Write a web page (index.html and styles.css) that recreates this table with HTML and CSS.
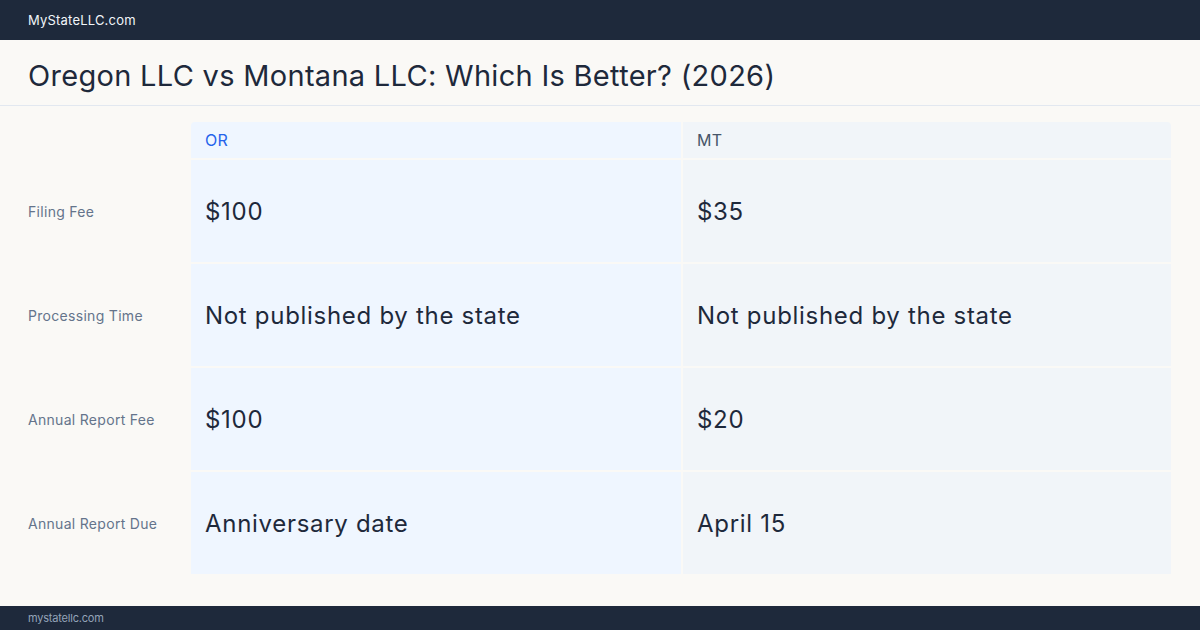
FILE: index.html
```html
<!DOCTYPE html>
<html lang="en">

<head>
    <meta charset="UTF-8">
    <meta name="viewport" content="width=device-width, initial-scale=1.0">
    <title>Oregon LLC vs Montana LLC</title>
    <link rel="stylesheet" href="styles.css">
</head>

<body>
    <div class="page">
        <!-- Top bar -->
        <div class="topbar">MyStateLLC.com</div>

        <!-- Title -->
        <div class="title-bar">
            <h1>Oregon LLC vs Montana LLC: Which Is Better? (2026)</h1>
        </div>

        <!-- Comparison table -->
        <div class="compare">
            <div class="label head"></div>
            <div class="cell head or">OR</div>
            <div class="cell head mt">MT</div>

            <div class="label">Filing Fee</div>
            <div class="cell or">$100</div>
            <div class="cell mt">$35</div>

            <div class="label">Processing Time</div>
            <div class="cell or">Not published by the state</div>
            <div class="cell mt">Not published by the state</div>

            <div class="label">Annual Report Fee</div>
            <div class="cell or">$100</div>
            <div class="cell mt">$20</div>

            <div class="label">Annual Report Due</div>
            <div class="cell or">Anniversary date</div>
            <div class="cell mt">April 15</div>
        </div>

        <!-- Footer -->
        <div class="footer">mystatellc.com</div>
    </div>
</body>

</html>
```

FILE: styles.css
```css
* {
    margin: 0;
    padding: 0;
    box-sizing: border-box;
}

body {
    font-family: Inter, "Noto Sans", sans-serif;
    background-color: #faf9f6;
    color: #1e293b;
}

.page {
    width: 1200px;
    height: 630px;
    display: flex;
    flex-direction: column;
}

.topbar {
    height: 40px;
    background-color: #1e293b;
    color: #f1f5f9;
    font-size: 13px;
    padding: 0 28px;
    display: flex;
    align-items: center;
    letter-spacing: 0.2px;
}

.title-bar {
    height: 66px;
    padding: 5px 28px 0 28px;
    display: flex;
    align-items: center;
    border-bottom: 1px solid #e2e8f0;
}

.title-bar h1 {
    font-size: 29px;
    font-weight: 400;
    letter-spacing: 0.3px;
    color: #1e293b;
}

.compare {
    display: grid;
    grid-template-columns: 161px 490px 488px;
    grid-template-rows: 36px repeat(4, 102px);
    column-gap: 2px;
    row-gap: 2px;
    padding: 16px 29px 0 28px;
    flex: 1;
}

.label {
    font-size: 14px;
    color: #64748b;
    display: flex;
    align-items: center;
    letter-spacing: 0.3px;
}

.cell {
    font-size: 24px;
    letter-spacing: 0.7px;
    padding: 0 14px;
    display: flex;
    align-items: center;
}

.or {
    background-color: #eff6ff;
}

.mt {
    background-color: #f1f5f9;
}

.cell.head {
    font-size: 16px;
    letter-spacing: 0.2px;
    color: #475569;
}

.cell.head.or {
    color: #2563eb;
    border-top-left-radius: 4px;
}

.cell.head.mt {
    border-top-right-radius: 4px;
}

.footer {
    height: 24px;
    background-color: #1e293b;
    color: #94a3b8;
    font-size: 11px;
    letter-spacing: -0.2px;
    padding: 0 28px;
    display: flex;
    align-items: center;
}
```
